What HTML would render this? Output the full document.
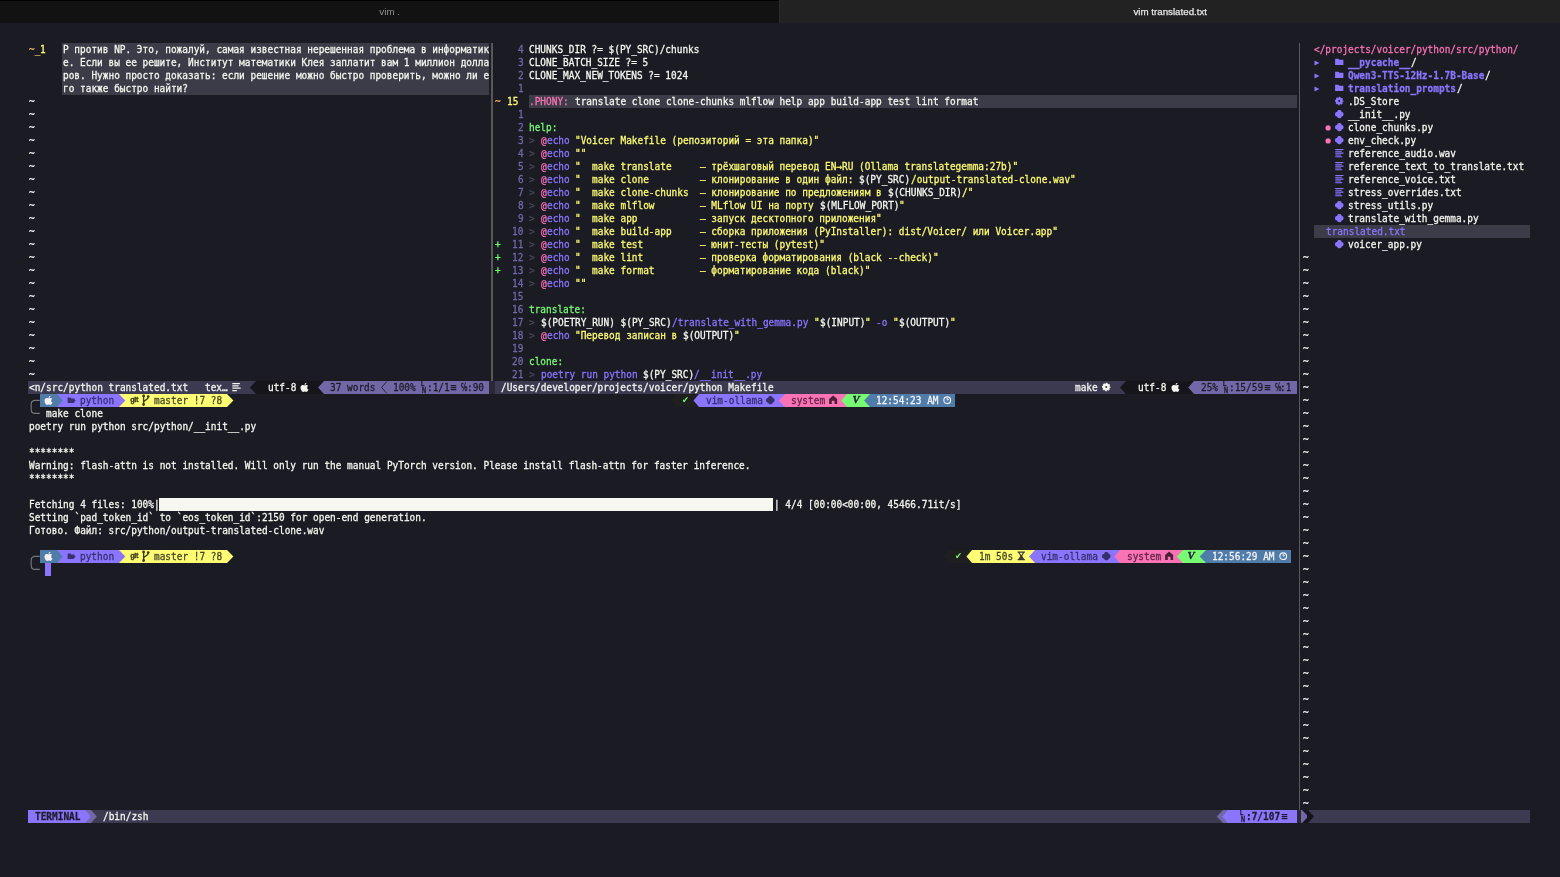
<!DOCTYPE html>
<html lang="ru"><head><meta charset="utf-8"><title>vim translated.txt</title>
<style>
html,body{margin:0;padding:0}
body{width:1560px;height:877px;overflow:hidden;background:#1b1b24;position:relative;
 font-family:"DejaVu Sans Mono","Liberation Mono",monospace;font-size:10.2px;color:#f6f6f0}
#tabs{position:absolute;left:0;top:0;width:1560px;height:22.5px;background:#222222;
 font-family:"Liberation Sans",sans-serif;font-size:9.75px;line-height:22px;will-change:transform}
#tabs .l{position:absolute;left:0;top:0;width:779.3px;height:22.5px;background:#121212;border-top:1px solid #000;box-sizing:border-box;color:#939393;text-align:center}
#tabs .sep{position:absolute;left:779.3px;top:0;width:1.2px;height:22.5px;background:#2c2c2c}
#tabs .r{position:absolute;left:780.5px;top:0;width:779.5px;height:22.5px;color:#e6e6e6;text-align:center}
#tabs span{position:relative;top:1.2px}
#tabs .r span{-webkit-text-stroke:.25px currentColor}
#tabs .l span{top:-.1px}
.b{position:absolute;display:block}
.t{position:absolute;white-space:pre;height:13px;line-height:13.8px;transform-origin:0 50%;transform:scaleX(0.9262);-webkit-text-stroke:.28px currentColor}
.s{position:absolute;display:block;overflow:visible}
.bd{font-weight:bold}
.tri{font-size:8px}
.dot{font-size:9.5px}
.chk{font-family:"DejaVu Sans","DejaVu Sans Mono",sans-serif;font-size:9px;font-weight:bold;margin-left:-.9px;-webkit-text-stroke:0}
.git{font-family:"Liberation Sans",sans-serif;font-weight:bold;font-size:7.3px;transform:none;-webkit-text-stroke:.3px currentColor;line-height:12.2px;letter-spacing:-.25px;margin-left:-1.2px}
.vim{font-family:"Liberation Serif",serif;font-weight:bold;font-style:italic;font-size:9.6px;transform:translateX(-1.6px) scaleX(1.12);-webkit-text-stroke:.4px currentColor;line-height:12.2px}
.lnL,.lnN{font-family:"Liberation Sans",sans-serif;font-weight:bold;transform:none;-webkit-text-stroke:.3px currentColor;line-height:7px;height:7px}
.lnL{font-size:6.9px;transform:scaleX(.8)}
.lnN{font-size:8.2px;transform:scaleX(.68)}
.sym{font-family:"DejaVu Sans","DejaVu Sans Mono",sans-serif;font-size:11.5px;font-weight:bold;transform:scaleX(.52);-webkit-text-stroke:0;line-height:12.6px}
</style></head><body>
<div id="tabs"><div class="l"><span>vim .</span></div><div class="sep"></div><div class="r"><span>vim translated.txt</span></div></div>
<div id="bgl">
<i class="b" style="left:491.23px;top:42.9px;width:1.3px;height:338px;background:#58585b"></i>
<i class="b" style="left:1298.86px;top:42.9px;width:1.3px;height:767px;background:#58585b"></i>
<i class="b" style="left:62px;top:43px;width:427px;height:52px;background:#3b3c48"></i>
<i class="b" style="left:529px;top:95px;width:768px;height:13px;background:#3b3c48"></i>
<i class="b" style="left:1314px;top:225px;width:216px;height:13px;background:#3b3c48"></i>
<i class="b" style="left:28px;top:381px;width:222px;height:13px;background:#3c3a50"></i>
<i class="b" style="left:250px;top:381px;width:6px;height:13px;background:#3c3a50"></i>
<i class="b" style="left:256px;top:381px;width:62px;height:13px;background:#16151c"></i>
<i class="b" style="left:318px;top:381px;width:6px;height:13px;background:#16151c"></i>
<i class="b" style="left:324px;top:381px;width:165px;height:13px;background:#7268a8"></i>
<i class="b" style="left:489px;top:381px;width:6px;height:13px;background:#2a2837"></i>
<i class="b" style="left:495px;top:381px;width:802px;height:13px;background:#3c3a50"></i>
<i class="b" style="left:1120px;top:381px;width:6px;height:13px;background:#3c3a50"></i>
<i class="b" style="left:1126px;top:381px;width:63px;height:13px;background:#16151c"></i>
<i class="b" style="left:1189px;top:381px;width:5px;height:13px;background:#16151c"></i>
<i class="b" style="left:1194px;top:381px;width:103px;height:13px;background:#7268a8"></i>
<i class="b" style="left:40px;top:394px;width:17px;height:13px;background:#507caa"></i>
<i class="b" style="left:57px;top:394px;width:5px;height:13px;background:#8b75ff"></i>
<i class="b" style="left:62px;top:394px;width:57px;height:13px;background:#8b75ff"></i>
<i class="b" style="left:119px;top:394px;width:6px;height:13px;background:#fdfc72"></i>
<i class="b" style="left:125px;top:394px;width:102px;height:13px;background:#fdfc72"></i>
<i class="b" style="left:677px;top:394px;width:17px;height:13px;background:#1f1f20"></i>
<i class="b" style="left:694px;top:394px;width:5px;height:13px;background:#1f1f20"></i>
<i class="b" style="left:699px;top:394px;width:80px;height:13px;background:#8b75ff"></i>
<i class="b" style="left:779px;top:394px;width:6px;height:13px;background:#8b75ff"></i>
<i class="b" style="left:785px;top:394px;width:57px;height:13px;background:#fb72b5"></i>
<i class="b" style="left:842px;top:394px;width:5px;height:13px;background:#fb72b5"></i>
<i class="b" style="left:847px;top:394px;width:17px;height:13px;background:#76fb72"></i>
<i class="b" style="left:864px;top:394px;width:6px;height:13px;background:#76fb72"></i>
<i class="b" style="left:870px;top:394px;width:85px;height:13px;background:#507caa"></i>
<i class="b" style="left:159px;top:498px;width:614px;height:13px;background:#f7f7f1"></i>
<i class="b" style="left:40px;top:550px;width:17px;height:13px;background:#507caa"></i>
<i class="b" style="left:57px;top:550px;width:5px;height:13px;background:#8b75ff"></i>
<i class="b" style="left:62px;top:550px;width:57px;height:13px;background:#8b75ff"></i>
<i class="b" style="left:119px;top:550px;width:6px;height:13px;background:#fdfc72"></i>
<i class="b" style="left:125px;top:550px;width:102px;height:13px;background:#fdfc72"></i>
<i class="b" style="left:950px;top:550px;width:17px;height:13px;background:#1f1f20"></i>
<i class="b" style="left:967px;top:550px;width:5px;height:13px;background:#1f1f20"></i>
<i class="b" style="left:972px;top:550px;width:57px;height:13px;background:#fdfc72"></i>
<i class="b" style="left:1029px;top:550px;width:6px;height:13px;background:#fdfc72"></i>
<i class="b" style="left:1035px;top:550px;width:80px;height:13px;background:#8b75ff"></i>
<i class="b" style="left:1115px;top:550px;width:5px;height:13px;background:#8b75ff"></i>
<i class="b" style="left:1120px;top:550px;width:57px;height:13px;background:#fb72b5"></i>
<i class="b" style="left:1177px;top:550px;width:6px;height:13px;background:#fb72b5"></i>
<i class="b" style="left:1183px;top:550px;width:17px;height:13px;background:#76fb72"></i>
<i class="b" style="left:1200px;top:550px;width:6px;height:13px;background:#76fb72"></i>
<i class="b" style="left:1206px;top:550px;width:85px;height:13px;background:#507caa"></i>
<i class="b" style="left:45px;top:563px;width:6px;height:13px;background:#8b75ff"></i>
<i class="b" style="left:28px;top:810px;width:57px;height:13px;background:#8b75ff"></i>
<i class="b" style="left:85px;top:810px;width:6px;height:13px;background:#7268a8"></i>
<i class="b" style="left:91px;top:810px;width:6px;height:13px;background:#3c3a50"></i>
<i class="b" style="left:97px;top:810px;width:1120px;height:13px;background:#3c3a50"></i>
<i class="b" style="left:1217px;top:810px;width:6px;height:13px;background:#3c3a50"></i>
<i class="b" style="left:1223px;top:810px;width:5px;height:13px;background:#7268a8"></i>
<i class="b" style="left:1228px;top:810px;width:69px;height:13px;background:#8b75ff"></i>
<i class="b" style="left:1297px;top:810px;width:5px;height:13px;background:#2a2837"></i>
<i class="b" style="left:1302px;top:810px;width:6px;height:13px;background:#16151c"></i>
<i class="b" style="left:1308px;top:810px;width:6px;height:13px;background:#3c3a50"></i>
<i class="b" style="left:1314px;top:810px;width:216px;height:13px;background:#3c3a50"></i>
</div>
<div id="icl">
<svg class="s" style="left:1313.72px;top:55.9px;color:#8b75ff" width="12" height="13" viewBox="0 0 12 13"><polygon points="0.5,4.5 5.4,7 0.5,9.5" fill="currentColor"/></svg>
<svg class="s" style="left:1336.47px;top:55.9px;color:#8b75ff" width="12" height="13" viewBox="0 0 12 13"><path fill="currentColor" d="M-0.9 2.7h3.3l0.9 1.1h4.1v5.3h-8.3z"/></svg>
<svg class="s" style="left:1313.72px;top:68.9px;color:#8b75ff" width="12" height="13" viewBox="0 0 12 13"><polygon points="0.5,4.5 5.4,7 0.5,9.5" fill="currentColor"/></svg>
<svg class="s" style="left:1336.47px;top:68.9px;color:#8b75ff" width="12" height="13" viewBox="0 0 12 13"><path fill="currentColor" d="M-0.9 2.7h3.3l0.9 1.1h4.1v5.3h-8.3z"/></svg>
<svg class="s" style="left:1313.72px;top:81.9px;color:#8b75ff" width="12" height="13" viewBox="0 0 12 13"><polygon points="0.5,4.5 5.4,7 0.5,9.5" fill="currentColor"/></svg>
<svg class="s" style="left:1336.47px;top:81.9px;color:#8b75ff" width="12" height="13" viewBox="0 0 12 13"><path fill="currentColor" d="M-0.9 2.7h3.3l0.9 1.1h4.1v5.3h-8.3z"/></svg>
<svg class="s" style="left:1336.47px;top:94.9px;color:#8b75ff" width="12" height="13" viewBox="0 0 12 13"><circle cx="3.25" cy="6.05" r="2.3" fill="none" stroke="currentColor" stroke-width="2.5"/><circle cx="3.25" cy="6.05" r="3.7" fill="none" stroke="currentColor" stroke-width="1.1" stroke-dasharray="1.7 1.206" stroke-dashoffset="0.85"/></svg>
<svg class="s" style="left:1336.47px;top:107.9px;color:#8b75ff" width="12" height="13" viewBox="0 0 12 13"><rect x="1.2" y="2" width="4.4" height="8.2" rx="1.7" fill="currentColor"/><rect x="-0.95" y="3.9" width="8.4" height="4.6" rx="1.7" fill="currentColor"/></svg>
<svg class="s" style="left:1325.1px;top:120.9px;color:#fb72b5" width="12" height="13" viewBox="0 0 12 13"><circle cx="3.1" cy="6.9" r="2.6" fill="currentColor"/></svg>
<svg class="s" style="left:1336.47px;top:120.9px;color:#8b75ff" width="12" height="13" viewBox="0 0 12 13"><rect x="1.2" y="2" width="4.4" height="8.2" rx="1.7" fill="currentColor"/><rect x="-0.95" y="3.9" width="8.4" height="4.6" rx="1.7" fill="currentColor"/></svg>
<svg class="s" style="left:1325.1px;top:133.9px;color:#fb72b5" width="12" height="13" viewBox="0 0 12 13"><circle cx="3.1" cy="6.9" r="2.6" fill="currentColor"/></svg>
<svg class="s" style="left:1336.47px;top:133.9px;color:#8b75ff" width="12" height="13" viewBox="0 0 12 13"><rect x="1.2" y="2" width="4.4" height="8.2" rx="1.7" fill="currentColor"/><rect x="-0.95" y="3.9" width="8.4" height="4.6" rx="1.7" fill="currentColor"/></svg>
<svg class="s" style="left:1336.47px;top:146.9px;color:#8b75ff" width="12" height="13" viewBox="0 0 12 13"><path stroke="currentColor" stroke-width="1.05" fill="none" d="M-0.7 2.5h8.2M-0.7 4.3h6.6M-0.7 6.1h8.2M-0.7 7.9h5.8M-0.7 9.7h7"/></svg>
<svg class="s" style="left:1336.47px;top:159.9px;color:#8b75ff" width="12" height="13" viewBox="0 0 12 13"><path stroke="currentColor" stroke-width="1.05" fill="none" d="M-0.7 2.5h8.2M-0.7 4.3h6.6M-0.7 6.1h8.2M-0.7 7.9h5.8M-0.7 9.7h7"/></svg>
<svg class="s" style="left:1336.47px;top:172.9px;color:#8b75ff" width="12" height="13" viewBox="0 0 12 13"><path stroke="currentColor" stroke-width="1.05" fill="none" d="M-0.7 2.5h8.2M-0.7 4.3h6.6M-0.7 6.1h8.2M-0.7 7.9h5.8M-0.7 9.7h7"/></svg>
<svg class="s" style="left:1336.47px;top:185.9px;color:#8b75ff" width="12" height="13" viewBox="0 0 12 13"><path stroke="currentColor" stroke-width="1.05" fill="none" d="M-0.7 2.5h8.2M-0.7 4.3h6.6M-0.7 6.1h8.2M-0.7 7.9h5.8M-0.7 9.7h7"/></svg>
<svg class="s" style="left:1336.47px;top:198.9px;color:#8b75ff" width="12" height="13" viewBox="0 0 12 13"><rect x="1.2" y="2" width="4.4" height="8.2" rx="1.7" fill="currentColor"/><rect x="-0.95" y="3.9" width="8.4" height="4.6" rx="1.7" fill="currentColor"/></svg>
<svg class="s" style="left:1336.47px;top:211.9px;color:#8b75ff" width="12" height="13" viewBox="0 0 12 13"><rect x="1.2" y="2" width="4.4" height="8.2" rx="1.7" fill="currentColor"/><rect x="-0.95" y="3.9" width="8.4" height="4.6" rx="1.7" fill="currentColor"/></svg>
<svg class="s" style="left:1336.47px;top:237.9px;color:#8b75ff" width="12" height="13" viewBox="0 0 12 13"><rect x="1.2" y="2" width="4.4" height="8.2" rx="1.7" fill="currentColor"/><rect x="-0.95" y="3.9" width="8.4" height="4.6" rx="1.7" fill="currentColor"/></svg>
<svg class="s" style="left:233.1px;top:380.9px;color:#f6f6f0" width="12" height="13" viewBox="0 0 12 13"><path stroke="currentColor" stroke-width="1.25" fill="none" d="M-0.7 2.6h7.6M-0.7 4.9h6.4M-0.7 7.2h8.4M-0.7 9.6h4.6"/></svg>
<svg class="s" style="left:250px;top:381px;color:#16151c" width="12" height="13" viewBox="0 0 12 13"><polygon points="7,0 6,0 -0.14,6.5 6,13 7,13" fill="currentColor"/></svg>
<svg class="s" style="left:301.35px;top:380.9px;color:#f6f6f0" width="12" height="13" viewBox="0 0 12 13"><path transform="translate(-1.97,0.95) scale(0.478,0.453)" fill="currentColor" d="M17.05 12.54c-.03-2.6 2.12-3.85 2.22-3.91-1.21-1.77-3.09-2.01-3.76-2.04-1.6-.16-3.12.94-3.93.94-.81 0-2.06-.92-3.39-.89-1.74.03-3.35 1.01-4.25 2.57-1.81 3.14-.46 7.79 1.3 10.34.86 1.25 1.89 2.65 3.24 2.6 1.3-.05 1.79-.84 3.36-.84 1.57 0 2.01.84 3.39.81 1.4-.03 2.28-1.27 3.14-2.52.99-1.45 1.4-2.85 1.42-2.92-.03-.01-2.72-1.04-2.74-4.14zM14.47 4.93c.72-.87 1.2-2.08 1.07-3.28-1.03.04-2.28.69-3.02 1.55-.66.77-1.24 2-1.09 3.18 1.15.09 2.33-.59 3.04-1.45z"/></svg>
<svg class="s" style="left:318px;top:381px;color:#7268a8" width="12" height="13" viewBox="0 0 12 13"><polygon points="7,0 6,0 0.11,6.5 6,13 7,13" fill="currentColor"/></svg>
<svg class="s" style="left:380.98px;top:380.9px;color:#1d1c26" width="12" height="13" viewBox="0 0 12 13"><polyline points="5.69,0.6 0.6,6.5 5.69,12.4" fill="none" stroke="currentColor" stroke-width="0.9"/></svg>
<svg class="s" style="left:449.23px;top:380.9px;color:#1d1c26" width="12" height="13" viewBox="0 0 12 13"><path stroke="currentColor" stroke-width="1.35" fill="none" d="M1.7 4.6h5.6M1.7 6.6h5.6M1.7 8.6h5.6"/></svg>
<svg class="s" style="left:1103.29px;top:380.9px;color:#f6f6f0" width="12" height="13" viewBox="0 0 12 13"><circle cx="3.25" cy="6.05" r="2.3" fill="none" stroke="currentColor" stroke-width="2.5"/><circle cx="3.25" cy="6.05" r="3.7" fill="none" stroke="currentColor" stroke-width="1.1" stroke-dasharray="1.7 1.206" stroke-dashoffset="0.85"/></svg>
<svg class="s" style="left:1120px;top:381px;color:#16151c" width="12" height="13" viewBox="0 0 12 13"><polygon points="7,0 6,0 0.05,6.5 6,13 7,13" fill="currentColor"/></svg>
<svg class="s" style="left:1171.54px;top:380.9px;color:#f6f6f0" width="12" height="13" viewBox="0 0 12 13"><path transform="translate(-1.97,0.95) scale(0.478,0.453)" fill="currentColor" d="M17.05 12.54c-.03-2.6 2.12-3.85 2.22-3.91-1.21-1.77-3.09-2.01-3.76-2.04-1.6-.16-3.12.94-3.93.94-.81 0-2.06-.92-3.39-.89-1.74.03-3.35 1.01-4.25 2.57-1.81 3.14-.46 7.79 1.3 10.34.86 1.25 1.89 2.65 3.24 2.6 1.3-.05 1.79-.84 3.36-.84 1.57 0 2.01.84 3.39.81 1.4-.03 2.28-1.27 3.14-2.52.99-1.45 1.4-2.85 1.42-2.92-.03-.01-2.72-1.04-2.74-4.14zM14.47 4.93c.72-.87 1.2-2.08 1.07-3.28-1.03.04-2.28.69-3.02 1.55-.66.77-1.24 2-1.09 3.18 1.15.09 2.33-.59 3.04-1.45z"/></svg>
<svg class="s" style="left:1189px;top:381px;color:#7268a8" width="12" height="13" viewBox="0 0 12 13"><polygon points="6,0 5,0 -0.7,6.5 5,13 6,13" fill="currentColor"/></svg>
<svg class="s" style="left:1262.54px;top:380.9px;color:#1d1c26" width="12" height="13" viewBox="0 0 12 13"><path stroke="currentColor" stroke-width="1.35" fill="none" d="M1.7 4.6h5.6M1.7 6.6h5.6M1.7 8.6h5.6"/></svg>
<svg class="s" style="left:0;top:0;width:60px;height:877px;color:#77777f" viewBox="0 0 60 877"><path d="M31.19 407.1 v-2.7 q0 -4 4 -4 H39.73" fill="none" stroke="currentColor" stroke-width="1.1"/></svg>
<svg class="s" style="left:0;top:0;width:60px;height:877px;color:#77777f" viewBox="0 0 60 877"><path d="M31.19 406.7 v2.7 q0 4 4 4 H39.73" fill="none" stroke="currentColor" stroke-width="1.1"/></svg>
<svg class="s" style="left:45.41px;top:393.9px;color:#f2f2f2" width="12" height="13" viewBox="0 0 12 13"><path transform="translate(-1.97,0.95) scale(0.478,0.453)" fill="currentColor" d="M17.05 12.54c-.03-2.6 2.12-3.85 2.22-3.91-1.21-1.77-3.09-2.01-3.76-2.04-1.6-.16-3.12.94-3.93.94-.81 0-2.06-.92-3.39-.89-1.74.03-3.35 1.01-4.25 2.57-1.81 3.14-.46 7.79 1.3 10.34.86 1.25 1.89 2.65 3.24 2.6 1.3-.05 1.79-.84 3.36-.84 1.57 0 2.01.84 3.39.81 1.4-.03 2.28-1.27 3.14-2.52.99-1.45 1.4-2.85 1.42-2.92-.03-.01-2.72-1.04-2.74-4.14zM14.47 4.93c.72-.87 1.2-2.08 1.07-3.28-1.03.04-2.28.69-3.02 1.55-.66.77-1.24 2-1.09 3.18 1.15.09 2.33-.59 3.04-1.45z"/></svg>
<svg class="s" style="left:57px;top:394px;color:#507caa" width="12" height="13" viewBox="0 0 12 13"><polygon points="-1,0 0,0 5.77,6.5 0,13 -1,13" fill="currentColor"/></svg>
<svg class="s" style="left:68.16px;top:393.9px;color:#3a3270" width="12" height="13" viewBox="0 0 12 13"><path fill="currentColor" d="M-0.4 3.5h2.9l0.9 0.9h3.2v1.7h1.2l-2.1 3h-6.1z"/></svg>
<svg class="s" style="left:119px;top:394px;color:#8b75ff" width="12" height="13" viewBox="0 0 12 13"><polygon points="-1,0 0,0 6.34,6.5 0,13 -1,13" fill="currentColor"/></svg>
<svg class="s" style="left:142.1px;top:393.9px;color:#3a3a1c" width="12" height="13" viewBox="0 0 12 13"><g fill="currentColor" stroke="currentColor" stroke-width="1.3"><circle cx="1.6" cy="1.9" r="0.75"/><circle cx="6.2" cy="2.6" r="0.75"/><circle cx="1.6" cy="10.5" r="0.75"/><path fill="none" d="M1.6 2.5v7.6M6.2 3.2c0 3-4.6 2.2-4.6 5.4"/></g></svg>
<svg class="s" style="left:227px;top:394px;color:#fdfc72" width="12" height="13" viewBox="0 0 12 13"><polygon points="-1,0 0,0 6.4,6.5 0,13 -1,13" fill="currentColor"/></svg>
<svg class="s" style="left:671px;top:394px;color:#1f1f20" width="12" height="13" viewBox="0 0 12 13"><polygon points="7,0 6,0 -0.26,6.5 6,13 7,13" fill="currentColor"/></svg>
<svg class="s" style="left:694px;top:394px;color:#8b75ff" width="12" height="13" viewBox="0 0 12 13"><polygon points="6,0 5,0 -0.51,6.5 5,13 6,13" fill="currentColor"/></svg>
<svg class="s" style="left:767.43px;top:393.9px;color:#352e68" width="12" height="13" viewBox="0 0 12 13"><rect x="1.2" y="2" width="4.4" height="8.2" rx="1.7" fill="currentColor"/><rect x="-0.95" y="3.9" width="8.4" height="4.6" rx="1.7" fill="currentColor"/></svg>
<svg class="s" style="left:779px;top:394px;color:#fb72b5" width="12" height="13" viewBox="0 0 12 13"><polygon points="7,0 6,0 -0.2,6.5 6,13 7,13" fill="currentColor"/></svg>
<svg class="s" style="left:830.29px;top:393.9px;color:#4a2038" width="12" height="13" viewBox="0 0 12 13"><path fill="currentColor" d="M3.15 1.5l4 3.5v5.1h-2.6v-3.3h-2.8v3.3h-2.6v-5.1z"/></svg>
<svg class="s" style="left:842px;top:394px;color:#76fb72" width="12" height="13" viewBox="0 0 12 13"><polygon points="6,0 5,0 -0.64,6.5 5,13 6,13" fill="currentColor"/></svg>
<svg class="s" style="left:864px;top:394px;color:#507caa" width="12" height="13" viewBox="0 0 12 13"><polygon points="7,0 6,0 0.11,6.5 6,13 7,13" fill="currentColor"/></svg>
<svg class="s" style="left:944.04px;top:393.9px;color:#f4f4f4" width="12" height="13" viewBox="0 0 12 13"><circle cx="3.2" cy="6.15" r="3.35" fill="none" stroke="currentColor" stroke-width="1.15"/><path d="M3.2 3.9v2.4l1.6-1.2" fill="none" stroke="currentColor" stroke-width="1"/></svg>
<svg class="s" style="left:0;top:0;width:60px;height:877px;color:#77777f" viewBox="0 0 60 877"><path d="M31.19 563.1 v-2.7 q0 -4 4 -4 H39.73" fill="none" stroke="currentColor" stroke-width="1.1"/></svg>
<svg class="s" style="left:0;top:0;width:60px;height:877px;color:#77777f" viewBox="0 0 60 877"><path d="M31.19 562.7 v2.7 q0 4 4 4 H39.73" fill="none" stroke="currentColor" stroke-width="1.1"/></svg>
<svg class="s" style="left:45.41px;top:549.9px;color:#f2f2f2" width="12" height="13" viewBox="0 0 12 13"><path transform="translate(-1.97,0.95) scale(0.478,0.453)" fill="currentColor" d="M17.05 12.54c-.03-2.6 2.12-3.85 2.22-3.91-1.21-1.77-3.09-2.01-3.76-2.04-1.6-.16-3.12.94-3.93.94-.81 0-2.06-.92-3.39-.89-1.74.03-3.35 1.01-4.25 2.57-1.81 3.14-.46 7.79 1.3 10.34.86 1.25 1.89 2.65 3.24 2.6 1.3-.05 1.79-.84 3.36-.84 1.57 0 2.01.84 3.39.81 1.4-.03 2.28-1.27 3.14-2.52.99-1.45 1.4-2.85 1.42-2.92-.03-.01-2.72-1.04-2.74-4.14zM14.47 4.93c.72-.87 1.2-2.08 1.07-3.28-1.03.04-2.28.69-3.02 1.55-.66.77-1.24 2-1.09 3.18 1.15.09 2.33-.59 3.04-1.45z"/></svg>
<svg class="s" style="left:57px;top:550px;color:#507caa" width="12" height="13" viewBox="0 0 12 13"><polygon points="-1,0 0,0 5.77,6.5 0,13 -1,13" fill="currentColor"/></svg>
<svg class="s" style="left:68.16px;top:549.9px;color:#3a3270" width="12" height="13" viewBox="0 0 12 13"><path fill="currentColor" d="M-0.4 3.5h2.9l0.9 0.9h3.2v1.7h1.2l-2.1 3h-6.1z"/></svg>
<svg class="s" style="left:119px;top:550px;color:#8b75ff" width="12" height="13" viewBox="0 0 12 13"><polygon points="-1,0 0,0 6.34,6.5 0,13 -1,13" fill="currentColor"/></svg>
<svg class="s" style="left:142.1px;top:549.9px;color:#3a3a1c" width="12" height="13" viewBox="0 0 12 13"><g fill="currentColor" stroke="currentColor" stroke-width="1.3"><circle cx="1.6" cy="1.9" r="0.75"/><circle cx="6.2" cy="2.6" r="0.75"/><circle cx="1.6" cy="10.5" r="0.75"/><path fill="none" d="M1.6 2.5v7.6M6.2 3.2c0 3-4.6 2.2-4.6 5.4"/></g></svg>
<svg class="s" style="left:227px;top:550px;color:#fdfc72" width="12" height="13" viewBox="0 0 12 13"><polygon points="-1,0 0,0 6.4,6.5 0,13 -1,13" fill="currentColor"/></svg>
<svg class="s" style="left:944px;top:550px;color:#1f1f20" width="12" height="13" viewBox="0 0 12 13"><polygon points="7,0 6,0 -0.26,6.5 6,13 7,13" fill="currentColor"/></svg>
<svg class="s" style="left:967px;top:550px;color:#fdfc72" width="12" height="13" viewBox="0 0 12 13"><polygon points="6,0 5,0 -0.51,6.5 5,13 6,13" fill="currentColor"/></svg>
<svg class="s" style="left:1017.98px;top:549.9px;color:#3c3a3a" width="12" height="13" viewBox="0 0 12 13"><path fill="currentColor" d="M-0.4 1.6h7.3v1.2h-0.8l-1.9 3.15 1.9 3.15h0.8v1.2h-7.3v-1.2h0.8l1.9-3.15-1.9-3.15h-0.8z M1.7 2.8l1.55 2.4 1.55-2.4z"/></svg>
<svg class="s" style="left:1029px;top:550px;color:#8b75ff" width="12" height="13" viewBox="0 0 12 13"><polygon points="7,0 6,0 0.05,6.5 6,13 7,13" fill="currentColor"/></svg>
<svg class="s" style="left:1102.99px;top:549.9px;color:#352e68" width="12" height="13" viewBox="0 0 12 13"><rect x="1.2" y="2" width="4.4" height="8.2" rx="1.7" fill="currentColor"/><rect x="-0.95" y="3.9" width="8.4" height="4.6" rx="1.7" fill="currentColor"/></svg>
<svg class="s" style="left:1115px;top:550px;color:#fb72b5" width="12" height="13" viewBox="0 0 12 13"><polygon points="6,0 5,0 -0.64,6.5 5,13 6,13" fill="currentColor"/></svg>
<svg class="s" style="left:1165.85px;top:549.9px;color:#4a2038" width="12" height="13" viewBox="0 0 12 13"><path fill="currentColor" d="M3.15 1.5l4 3.5v5.1h-2.6v-3.3h-2.8v3.3h-2.6v-5.1z"/></svg>
<svg class="s" style="left:1177px;top:550px;color:#76fb72" width="12" height="13" viewBox="0 0 12 13"><polygon points="7,0 6,0 -0.08,6.5 6,13 7,13" fill="currentColor"/></svg>
<svg class="s" style="left:1200px;top:550px;color:#507caa" width="12" height="13" viewBox="0 0 12 13"><polygon points="7,0 6,0 -0.33,6.5 6,13 7,13" fill="currentColor"/></svg>
<svg class="s" style="left:1279.6px;top:549.9px;color:#f4f4f4" width="12" height="13" viewBox="0 0 12 13"><circle cx="3.2" cy="6.15" r="3.35" fill="none" stroke="currentColor" stroke-width="1.15"/><path d="M3.2 3.9v2.4l1.6-1.2" fill="none" stroke="currentColor" stroke-width="1"/></svg>
<svg class="s" style="left:85px;top:810px;color:#8b75ff" width="12" height="13" viewBox="0 0 12 13"><polygon points="-1,0 0,0 6.21,6.5 0,13 -1,13" fill="currentColor"/></svg>
<svg class="s" style="left:91px;top:810px;color:#7268a8" width="12" height="13" viewBox="0 0 12 13"><polygon points="-1,0 0,0 5.9,6.5 0,13 -1,13" fill="currentColor"/></svg>
<svg class="s" style="left:1217px;top:810px;color:#7268a8" width="12" height="13" viewBox="0 0 12 13"><polygon points="7,0 6,0 -0.26,6.5 6,13 7,13" fill="currentColor"/></svg>
<svg class="s" style="left:1223px;top:810px;color:#8b75ff" width="12" height="13" viewBox="0 0 12 13"><polygon points="6,0 5,0 -0.58,6.5 5,13 6,13" fill="currentColor"/></svg>
<svg class="s" style="left:1279.6px;top:809.9px;color:#1d1c26" width="12" height="13" viewBox="0 0 12 13"><path stroke="currentColor" stroke-width="1.35" fill="none" d="M1.7 4.6h5.6M1.7 6.6h5.6M1.7 8.6h5.6"/></svg>
<svg class="s" style="left:1302px;top:810px;color:#7268a8" width="12" height="13" viewBox="0 0 12 13"><polygon points="-1,0 0,0 6.34,6.5 0,13 -1,13" fill="currentColor"/></svg>
<svg class="s" style="left:1308px;top:810px;color:#16151c" width="12" height="13" viewBox="0 0 12 13"><polygon points="-1,0 0,0 6.02,6.5 0,13 -1,13" fill="currentColor"/></svg>
</div>
<div id="txl" style="will-change:transform">
<span class="t" style="left:28.95px;top:42.9px;color:#f0b266">~_</span>
<span class="t" style="left:40.33px;top:42.9px;color:#fdfc72">1</span>
<span class="t" style="left:63.08px;top:42.9px;color:#f6f6f0">P против NP. Это, пожалуй, самая известная нерешенная проблема в информатик</span>
<span class="t" style="left:63.08px;top:55.9px;color:#f6f6f0">е. Если вы ее решите, Институт математики Клея заплатит вам 1 миллион долла</span>
<span class="t" style="left:63.08px;top:68.9px;color:#f6f6f0">ров. Нужно просто доказать: если решение можно быстро проверить, можно ли е</span>
<span class="t" style="left:63.08px;top:81.9px;color:#f6f6f0">го также быстро найти?</span>
<span class="t" style="left:28.95px;top:94.9px;color:#f6f6f0">~</span>
<span class="t" style="left:28.95px;top:107.9px;color:#f6f6f0">~</span>
<span class="t" style="left:28.95px;top:120.9px;color:#f6f6f0">~</span>
<span class="t" style="left:28.95px;top:133.9px;color:#f6f6f0">~</span>
<span class="t" style="left:28.95px;top:146.9px;color:#f6f6f0">~</span>
<span class="t" style="left:28.95px;top:159.9px;color:#f6f6f0">~</span>
<span class="t" style="left:28.95px;top:172.9px;color:#f6f6f0">~</span>
<span class="t" style="left:28.95px;top:185.9px;color:#f6f6f0">~</span>
<span class="t" style="left:28.95px;top:198.9px;color:#f6f6f0">~</span>
<span class="t" style="left:28.95px;top:211.9px;color:#f6f6f0">~</span>
<span class="t" style="left:28.95px;top:224.9px;color:#f6f6f0">~</span>
<span class="t" style="left:28.95px;top:237.9px;color:#f6f6f0">~</span>
<span class="t" style="left:28.95px;top:250.9px;color:#f6f6f0">~</span>
<span class="t" style="left:28.95px;top:263.9px;color:#f6f6f0">~</span>
<span class="t" style="left:28.95px;top:276.9px;color:#f6f6f0">~</span>
<span class="t" style="left:28.95px;top:289.9px;color:#f6f6f0">~</span>
<span class="t" style="left:28.95px;top:302.9px;color:#f6f6f0">~</span>
<span class="t" style="left:28.95px;top:315.9px;color:#f6f6f0">~</span>
<span class="t" style="left:28.95px;top:328.9px;color:#f6f6f0">~</span>
<span class="t" style="left:28.95px;top:341.9px;color:#f6f6f0">~</span>
<span class="t" style="left:28.95px;top:354.9px;color:#f6f6f0">~</span>
<span class="t" style="left:28.95px;top:367.9px;color:#f6f6f0">~</span>
<span class="t" style="left:518.08px;top:42.9px;color:#7268a8">4</span>
<span class="t" style="left:529.45px;top:42.9px;color:#f6f6f0">CHUNKS_DIR ?= $(PY_SRC)/chunks</span>
<span class="t" style="left:518.08px;top:55.9px;color:#7268a8">3</span>
<span class="t" style="left:529.45px;top:55.9px;color:#f6f6f0">CLONE_BATCH_SIZE ?= 5</span>
<span class="t" style="left:518.08px;top:68.9px;color:#7268a8">2</span>
<span class="t" style="left:529.45px;top:68.9px;color:#f6f6f0">CLONE_MAX_NEW_TOKENS ?= 1024</span>
<span class="t" style="left:518.08px;top:81.9px;color:#7268a8">1</span>
<span class="t" style="left:495.33px;top:94.9px;color:#f0b266">~</span>
<span class="t" style="left:506.7px;top:94.9px;color:#fdfc72">15</span>
<span class="t" style="left:529.45px;top:94.9px;color:#fb72b5">.PHONY:</span>
<span class="t" style="left:574.95px;top:94.9px;color:#f6f6f0">translate clone clone-chunks mlflow help app build-app test lint format</span>
<span class="t" style="left:518.08px;top:107.9px;color:#7268a8">1</span>
<span class="t" style="left:518.08px;top:120.9px;color:#7268a8">2</span>
<span class="t" style="left:529.45px;top:120.9px;color:#76fb72">help:</span>
<span class="t" style="left:518.08px;top:133.9px;color:#7268a8">3</span>
<span class="t" style="left:529.45px;top:133.9px;color:#474659">&gt;</span>
<span class="t" style="left:540.83px;top:133.9px;color:#fb72b5">@</span>
<span class="t" style="left:546.51px;top:133.9px;color:#8b75ff">echo</span>
<span class="t" style="left:574.95px;top:133.9px;color:#fdfc72">"Voicer Makefile (репозиторий = эта папка)"</span>
<span class="t" style="left:518.08px;top:146.9px;color:#7268a8">4</span>
<span class="t" style="left:529.45px;top:146.9px;color:#474659">&gt;</span>
<span class="t" style="left:540.83px;top:146.9px;color:#fb72b5">@</span>
<span class="t" style="left:546.51px;top:146.9px;color:#8b75ff">echo</span>
<span class="t" style="left:574.95px;top:146.9px;color:#fdfc72">""</span>
<span class="t" style="left:518.08px;top:159.9px;color:#7268a8">5</span>
<span class="t" style="left:529.45px;top:159.9px;color:#474659">&gt;</span>
<span class="t" style="left:540.83px;top:159.9px;color:#fb72b5">@</span>
<span class="t" style="left:546.51px;top:159.9px;color:#8b75ff">echo</span>
<span class="t" style="left:574.95px;top:159.9px;color:#fdfc72">"  make translate     — трёхшаговый перевод EN→RU (Ollama translategemma:27b)"</span>
<span class="t" style="left:518.08px;top:172.9px;color:#7268a8">6</span>
<span class="t" style="left:529.45px;top:172.9px;color:#474659">&gt;</span>
<span class="t" style="left:540.83px;top:172.9px;color:#fb72b5">@</span>
<span class="t" style="left:546.51px;top:172.9px;color:#8b75ff">echo</span>
<span class="t" style="left:574.95px;top:172.9px;color:#fdfc72">"  make clone         — клонирование в один файл:</span>
<span class="t" style="left:859.33px;top:172.9px;color:#f6f6f0">$(PY_SRC)</span>
<span class="t" style="left:910.51px;top:172.9px;color:#fdfc72">/output-translated-clone.wav"</span>
<span class="t" style="left:518.08px;top:185.9px;color:#7268a8">7</span>
<span class="t" style="left:529.45px;top:185.9px;color:#474659">&gt;</span>
<span class="t" style="left:540.83px;top:185.9px;color:#fb72b5">@</span>
<span class="t" style="left:546.51px;top:185.9px;color:#8b75ff">echo</span>
<span class="t" style="left:574.95px;top:185.9px;color:#fdfc72">"  make clone-chunks  — клонирование по предложениям в</span>
<span class="t" style="left:887.76px;top:185.9px;color:#f6f6f0">$(CHUNKS_DIR)</span>
<span class="t" style="left:961.7px;top:185.9px;color:#fdfc72">/"</span>
<span class="t" style="left:518.08px;top:198.9px;color:#7268a8">8</span>
<span class="t" style="left:529.45px;top:198.9px;color:#474659">&gt;</span>
<span class="t" style="left:540.83px;top:198.9px;color:#fb72b5">@</span>
<span class="t" style="left:546.51px;top:198.9px;color:#8b75ff">echo</span>
<span class="t" style="left:574.95px;top:198.9px;color:#fdfc72">"  make mlflow        — MLflow UI на порту</span>
<span class="t" style="left:819.51px;top:198.9px;color:#f6f6f0">$(MLFLOW_PORT)</span>
<span class="t" style="left:899.14px;top:198.9px;color:#fdfc72">"</span>
<span class="t" style="left:518.08px;top:211.9px;color:#7268a8">9</span>
<span class="t" style="left:529.45px;top:211.9px;color:#474659">&gt;</span>
<span class="t" style="left:540.83px;top:211.9px;color:#fb72b5">@</span>
<span class="t" style="left:546.51px;top:211.9px;color:#8b75ff">echo</span>
<span class="t" style="left:574.95px;top:211.9px;color:#fdfc72">"  make app           — запуск десктопного приложения"</span>
<span class="t" style="left:512.39px;top:224.9px;color:#7268a8">10</span>
<span class="t" style="left:529.45px;top:224.9px;color:#474659">&gt;</span>
<span class="t" style="left:540.83px;top:224.9px;color:#fb72b5">@</span>
<span class="t" style="left:546.51px;top:224.9px;color:#8b75ff">echo</span>
<span class="t" style="left:574.95px;top:224.9px;color:#fdfc72">"  make build-app     — сборка приложения (PyInstaller): dist/Voicer/ или Voicer.app"</span>
<span class="t" style="left:512.39px;top:237.9px;color:#7268a8">11</span>
<span class="t" style="left:495.33px;top:237.9px;color:#76fb72">+</span>
<span class="t" style="left:529.45px;top:237.9px;color:#474659">&gt;</span>
<span class="t" style="left:540.83px;top:237.9px;color:#fb72b5">@</span>
<span class="t" style="left:546.51px;top:237.9px;color:#8b75ff">echo</span>
<span class="t" style="left:574.95px;top:237.9px;color:#fdfc72">"  make test          — юнит-тесты (pytest)"</span>
<span class="t" style="left:512.39px;top:250.9px;color:#7268a8">12</span>
<span class="t" style="left:495.33px;top:250.9px;color:#76fb72">+</span>
<span class="t" style="left:529.45px;top:250.9px;color:#474659">&gt;</span>
<span class="t" style="left:540.83px;top:250.9px;color:#fb72b5">@</span>
<span class="t" style="left:546.51px;top:250.9px;color:#8b75ff">echo</span>
<span class="t" style="left:574.95px;top:250.9px;color:#fdfc72">"  make lint          — проверка форматирования (black --check)"</span>
<span class="t" style="left:512.39px;top:263.9px;color:#7268a8">13</span>
<span class="t" style="left:495.33px;top:263.9px;color:#76fb72">+</span>
<span class="t" style="left:529.45px;top:263.9px;color:#474659">&gt;</span>
<span class="t" style="left:540.83px;top:263.9px;color:#fb72b5">@</span>
<span class="t" style="left:546.51px;top:263.9px;color:#8b75ff">echo</span>
<span class="t" style="left:574.95px;top:263.9px;color:#fdfc72">"  make format        — форматирование кода (black)"</span>
<span class="t" style="left:512.39px;top:276.9px;color:#7268a8">14</span>
<span class="t" style="left:529.45px;top:276.9px;color:#474659">&gt;</span>
<span class="t" style="left:540.83px;top:276.9px;color:#fb72b5">@</span>
<span class="t" style="left:546.51px;top:276.9px;color:#8b75ff">echo</span>
<span class="t" style="left:574.95px;top:276.9px;color:#fdfc72">""</span>
<span class="t" style="left:512.39px;top:289.9px;color:#7268a8">15</span>
<span class="t" style="left:512.39px;top:302.9px;color:#7268a8">16</span>
<span class="t" style="left:529.45px;top:302.9px;color:#76fb72">translate:</span>
<span class="t" style="left:512.39px;top:315.9px;color:#7268a8">17</span>
<span class="t" style="left:529.45px;top:315.9px;color:#474659">&gt;</span>
<span class="t" style="left:540.83px;top:315.9px;color:#f6f6f0">$(POETRY_RUN) $(PY_SRC)</span>
<span class="t" style="left:671.64px;top:315.9px;color:#8b75ff">/translate_with_gemma.py</span>
<span class="t" style="left:813.83px;top:315.9px;color:#fdfc72">"</span>
<span class="t" style="left:819.51px;top:315.9px;color:#f6f6f0">$(INPUT)</span>
<span class="t" style="left:865.01px;top:315.9px;color:#fdfc72">"</span>
<span class="t" style="left:876.39px;top:315.9px;color:#8b75ff">-o</span>
<span class="t" style="left:893.45px;top:315.9px;color:#fdfc72">"</span>
<span class="t" style="left:899.14px;top:315.9px;color:#f6f6f0">$(OUTPUT)</span>
<span class="t" style="left:950.33px;top:315.9px;color:#fdfc72">"</span>
<span class="t" style="left:512.39px;top:328.9px;color:#7268a8">18</span>
<span class="t" style="left:529.45px;top:328.9px;color:#474659">&gt;</span>
<span class="t" style="left:540.83px;top:328.9px;color:#fb72b5">@</span>
<span class="t" style="left:546.51px;top:328.9px;color:#8b75ff">echo</span>
<span class="t" style="left:574.95px;top:328.9px;color:#fdfc72">"Перевод записан в</span>
<span class="t" style="left:683.01px;top:328.9px;color:#f6f6f0">$(OUTPUT)</span>
<span class="t" style="left:734.2px;top:328.9px;color:#fdfc72">"</span>
<span class="t" style="left:512.39px;top:341.9px;color:#7268a8">19</span>
<span class="t" style="left:512.39px;top:354.9px;color:#7268a8">20</span>
<span class="t" style="left:529.45px;top:354.9px;color:#76fb72">clone:</span>
<span class="t" style="left:512.39px;top:367.9px;color:#7268a8">21</span>
<span class="t" style="left:529.45px;top:367.9px;color:#474659">&gt;</span>
<span class="t" style="left:540.83px;top:367.9px;color:#8b75ff">poetry run python</span>
<span class="t" style="left:643.2px;top:367.9px;color:#f6f6f0">$(PY_SRC)</span>
<span class="t" style="left:694.39px;top:367.9px;color:#8b75ff">/__init__.py</span>
<span class="t" style="left:1314.32px;top:42.9px;color:#fb72b5">&lt;/projects/voicer/python/src/python/</span>
<span class="t bd" style="left:1348.45px;top:55.9px;color:#8b75ff">__pycache__</span>
<span class="t" style="left:1411.01px;top:55.9px;color:#f6f6f0">/</span>
<span class="t bd" style="left:1348.45px;top:68.9px;color:#8b75ff">Qwen3-TTS-12Hz-1.7B-Base</span>
<span class="t" style="left:1484.95px;top:68.9px;color:#f6f6f0">/</span>
<span class="t bd" style="left:1348.45px;top:81.9px;color:#8b75ff">translation_prompts</span>
<span class="t" style="left:1456.51px;top:81.9px;color:#f6f6f0">/</span>
<span class="t" style="left:1348.45px;top:94.9px;color:#f6f6f0">.DS_Store</span>
<span class="t" style="left:1348.45px;top:107.9px;color:#f6f6f0">__init__.py</span>
<span class="t" style="left:1348.45px;top:120.9px;color:#f6f6f0">clone_chunks.py</span>
<span class="t" style="left:1348.45px;top:133.9px;color:#f6f6f0">env_check.py</span>
<span class="t" style="left:1348.45px;top:146.9px;color:#f6f6f0">reference_audio.wav</span>
<span class="t" style="left:1348.45px;top:159.9px;color:#f6f6f0">reference_text_to_translate.txt</span>
<span class="t" style="left:1348.45px;top:172.9px;color:#f6f6f0">reference_voice.txt</span>
<span class="t" style="left:1348.45px;top:185.9px;color:#f6f6f0">stress_overrides.txt</span>
<span class="t" style="left:1348.45px;top:198.9px;color:#f6f6f0">stress_utils.py</span>
<span class="t" style="left:1348.45px;top:211.9px;color:#f6f6f0">translate_with_gemma.py</span>
<span class="t" style="left:1348.45px;top:237.9px;color:#f6f6f0">voicer_app.py</span>
<span class="t" style="left:1325.7px;top:224.9px;color:#8b75ff">translated.txt</span>
<span class="t" style="left:1302.95px;top:250.9px;color:#f6f6f0">~</span>
<span class="t" style="left:1302.95px;top:263.9px;color:#f6f6f0">~</span>
<span class="t" style="left:1302.95px;top:276.9px;color:#f6f6f0">~</span>
<span class="t" style="left:1302.95px;top:289.9px;color:#f6f6f0">~</span>
<span class="t" style="left:1302.95px;top:302.9px;color:#f6f6f0">~</span>
<span class="t" style="left:1302.95px;top:315.9px;color:#f6f6f0">~</span>
<span class="t" style="left:1302.95px;top:328.9px;color:#f6f6f0">~</span>
<span class="t" style="left:1302.95px;top:341.9px;color:#f6f6f0">~</span>
<span class="t" style="left:1302.95px;top:354.9px;color:#f6f6f0">~</span>
<span class="t" style="left:1302.95px;top:367.9px;color:#f6f6f0">~</span>
<span class="t" style="left:1302.95px;top:380.9px;color:#f6f6f0">~</span>
<span class="t" style="left:1302.95px;top:393.9px;color:#f6f6f0">~</span>
<span class="t" style="left:1302.95px;top:406.9px;color:#f6f6f0">~</span>
<span class="t" style="left:1302.95px;top:419.9px;color:#f6f6f0">~</span>
<span class="t" style="left:1302.95px;top:432.9px;color:#f6f6f0">~</span>
<span class="t" style="left:1302.95px;top:445.9px;color:#f6f6f0">~</span>
<span class="t" style="left:1302.95px;top:458.9px;color:#f6f6f0">~</span>
<span class="t" style="left:1302.95px;top:471.9px;color:#f6f6f0">~</span>
<span class="t" style="left:1302.95px;top:484.9px;color:#f6f6f0">~</span>
<span class="t" style="left:1302.95px;top:497.9px;color:#f6f6f0">~</span>
<span class="t" style="left:1302.95px;top:510.9px;color:#f6f6f0">~</span>
<span class="t" style="left:1302.95px;top:523.9px;color:#f6f6f0">~</span>
<span class="t" style="left:1302.95px;top:536.9px;color:#f6f6f0">~</span>
<span class="t" style="left:1302.95px;top:549.9px;color:#f6f6f0">~</span>
<span class="t" style="left:1302.95px;top:562.9px;color:#f6f6f0">~</span>
<span class="t" style="left:1302.95px;top:575.9px;color:#f6f6f0">~</span>
<span class="t" style="left:1302.95px;top:588.9px;color:#f6f6f0">~</span>
<span class="t" style="left:1302.95px;top:601.9px;color:#f6f6f0">~</span>
<span class="t" style="left:1302.95px;top:614.9px;color:#f6f6f0">~</span>
<span class="t" style="left:1302.95px;top:627.9px;color:#f6f6f0">~</span>
<span class="t" style="left:1302.95px;top:640.9px;color:#f6f6f0">~</span>
<span class="t" style="left:1302.95px;top:653.9px;color:#f6f6f0">~</span>
<span class="t" style="left:1302.95px;top:666.9px;color:#f6f6f0">~</span>
<span class="t" style="left:1302.95px;top:679.9px;color:#f6f6f0">~</span>
<span class="t" style="left:1302.95px;top:692.9px;color:#f6f6f0">~</span>
<span class="t" style="left:1302.95px;top:705.9px;color:#f6f6f0">~</span>
<span class="t" style="left:1302.95px;top:718.9px;color:#f6f6f0">~</span>
<span class="t" style="left:1302.95px;top:731.9px;color:#f6f6f0">~</span>
<span class="t" style="left:1302.95px;top:744.9px;color:#f6f6f0">~</span>
<span class="t" style="left:1302.95px;top:757.9px;color:#f6f6f0">~</span>
<span class="t" style="left:1302.95px;top:770.9px;color:#f6f6f0">~</span>
<span class="t" style="left:1302.95px;top:783.9px;color:#f6f6f0">~</span>
<span class="t" style="left:1302.95px;top:796.9px;color:#f6f6f0">~</span>
<span class="t" style="left:28.95px;top:380.9px;color:#f6f6f0">&lt;n/src/python translated.txt</span>
<span class="t" style="left:205.26px;top:380.9px;color:#f6f6f0">tex…</span>
<span class="t" style="left:267.83px;top:380.9px;color:#f6f6f0">utf-8</span>
<span class="t" style="left:330.39px;top:380.9px;color:#1d1c26">37 words</span>
<span class="t" style="left:392.95px;top:380.9px;color:#1d1c26">100%</span>
<span class="t lnL" style="left:421.19px;top:380.1px;color:#1d1c26">L</span>
<span class="t lnN" style="left:422.29px;top:386.9px;color:#1d1c26">N</span>
<span class="t" style="left:427.08px;top:380.9px;color:#1d1c26">:1/1</span>
<span class="t sym" style="left:461.2px;top:380.9px;color:#1d1c26">℅</span>
<span class="t" style="left:466.89px;top:380.9px;color:#1d1c26">:90</span>
<span class="t" style="left:501.01px;top:380.9px;color:#f6f6f0">/Users/developer/projects/voicer/python Makefile</span>
<span class="t" style="left:1075.45px;top:380.9px;color:#f6f6f0">make</span>
<span class="t" style="left:1138.01px;top:380.9px;color:#f6f6f0">utf-8</span>
<span class="t" style="left:1200.57px;top:380.9px;color:#1d1c26">25%</span>
<span class="t lnL" style="left:1223.12px;top:380.1px;color:#1d1c26">L</span>
<span class="t lnN" style="left:1224.22px;top:386.9px;color:#1d1c26">N</span>
<span class="t" style="left:1229.01px;top:380.9px;color:#1d1c26">:15/59</span>
<span class="t sym" style="left:1274.51px;top:380.9px;color:#1d1c26">℅</span>
<span class="t" style="left:1280.2px;top:380.9px;color:#1d1c26">:1</span>
<span class="t" style="left:80.14px;top:393.9px;color:#37306c">python</span>
<span class="t git" style="left:131.32px;top:393.9px;color:#3a3a1c">git</span>
<span class="t" style="left:154.07px;top:393.9px;color:#46452c">master !7 ?8</span>
<span class="t chk" style="left:683.01px;top:393.9px;color:#76fb72">✔</span>
<span class="t" style="left:705.76px;top:393.9px;color:#352e68">vim-ollama</span>
<span class="t" style="left:791.08px;top:393.9px;color:#5c2746">system</span>
<span class="t vim" style="left:853.64px;top:393.9px;color:#2a1f42">V</span>
<span class="t" style="left:876.39px;top:393.9px;color:#f4f4f4">12:54:23 AM</span>
<span class="t" style="left:46.01px;top:406.9px;color:#f6f6f0">make clone</span>
<span class="t" style="left:28.95px;top:419.9px;color:#f6f6f0">poetry run python src/python/__init__.py</span>
<span class="t" style="left:28.95px;top:445.9px;color:#f6f6f0">********</span>
<span class="t" style="left:28.95px;top:458.9px;color:#f6f6f0">Warning: flash-attn is not installed. Will only run the manual PyTorch version. Please install flash-attn for faster inference.</span>
<span class="t" style="left:28.95px;top:471.9px;color:#f6f6f0">********</span>
<span class="t" style="left:28.95px;top:497.9px;color:#f6f6f0">Fetching 4 files: 100%|</span>
<span class="t" style="left:774.01px;top:497.9px;color:#f6f6f0">| 4/4 [00:00&lt;00:00, 45466.71it/s]</span>
<span class="t" style="left:28.95px;top:510.9px;color:#f6f6f0">Setting `pad_token_id` to `eos_token_id`:2150 for open-end generation.</span>
<span class="t" style="left:28.95px;top:523.9px;color:#f6f6f0">Готово. Файл: src/python/output-translated-clone.wav</span>
<span class="t" style="left:80.14px;top:549.9px;color:#37306c">python</span>
<span class="t git" style="left:131.32px;top:549.9px;color:#3a3a1c">git</span>
<span class="t" style="left:154.07px;top:549.9px;color:#46452c">master !7 ?8</span>
<span class="t chk" style="left:956.01px;top:549.9px;color:#76fb72">✔</span>
<span class="t" style="left:978.76px;top:549.9px;color:#44432f">1m 50s</span>
<span class="t" style="left:1041.32px;top:549.9px;color:#352e68">vim-ollama</span>
<span class="t" style="left:1126.64px;top:549.9px;color:#5c2746">system</span>
<span class="t vim" style="left:1189.2px;top:549.9px;color:#2a1f42">V</span>
<span class="t" style="left:1211.95px;top:549.9px;color:#f4f4f4">12:56:29 AM</span>
<span class="t bd" style="left:34.64px;top:809.9px;color:#1d1c26">TERMINAL</span>
<span class="t" style="left:102.89px;top:809.9px;color:#f6f6f0">/bin/zsh</span>
<span class="t lnL" style="left:1240.19px;top:809.1px;color:#1d1c26">L</span>
<span class="t lnN" style="left:1241.29px;top:815.9px;color:#1d1c26">N</span>
<span class="t bd" style="left:1246.07px;top:809.9px;color:#1d1c26">:7/107</span>
</div>
</body></html>
